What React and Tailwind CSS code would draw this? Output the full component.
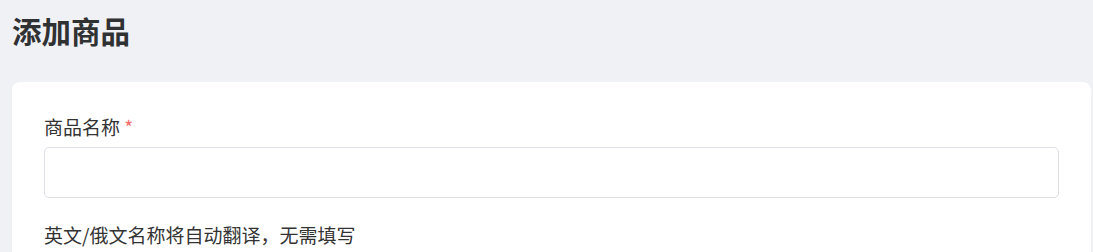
export default function App() {
  return (
    <div
      className="min-h-[252px] bg-[#f0f1f5] pl-3 pr-[2px] pt-[10px] text-[#333]"
      style={{ fontFamily: '"Noto Sans CJK SC", "Noto Sans", sans-serif' }}
    >
      <h1 className="text-[29.5px] font-bold leading-[40px] text-[#303133]">添加商品</h1>
      <section className="mt-[32px] rounded-lg bg-white px-8 pt-[32px] pb-8">
        <label className="block text-[19px] leading-[26px] text-[#333]">
          商品名称 <span className="text-[#f56c6c]">*</span>
        </label>
        <input
          type="text"
          className="mt-[7px] block h-[51px] w-full rounded-[5px] border border-[#dcdfe6] bg-white px-3 outline-none"
        />
        <p className="mt-[24px] text-[19px] leading-[26px] text-[#333]">
          英文/俄文名称将自动翻译，无需填写
        </p>
      </section>
    </div>
  );
}
